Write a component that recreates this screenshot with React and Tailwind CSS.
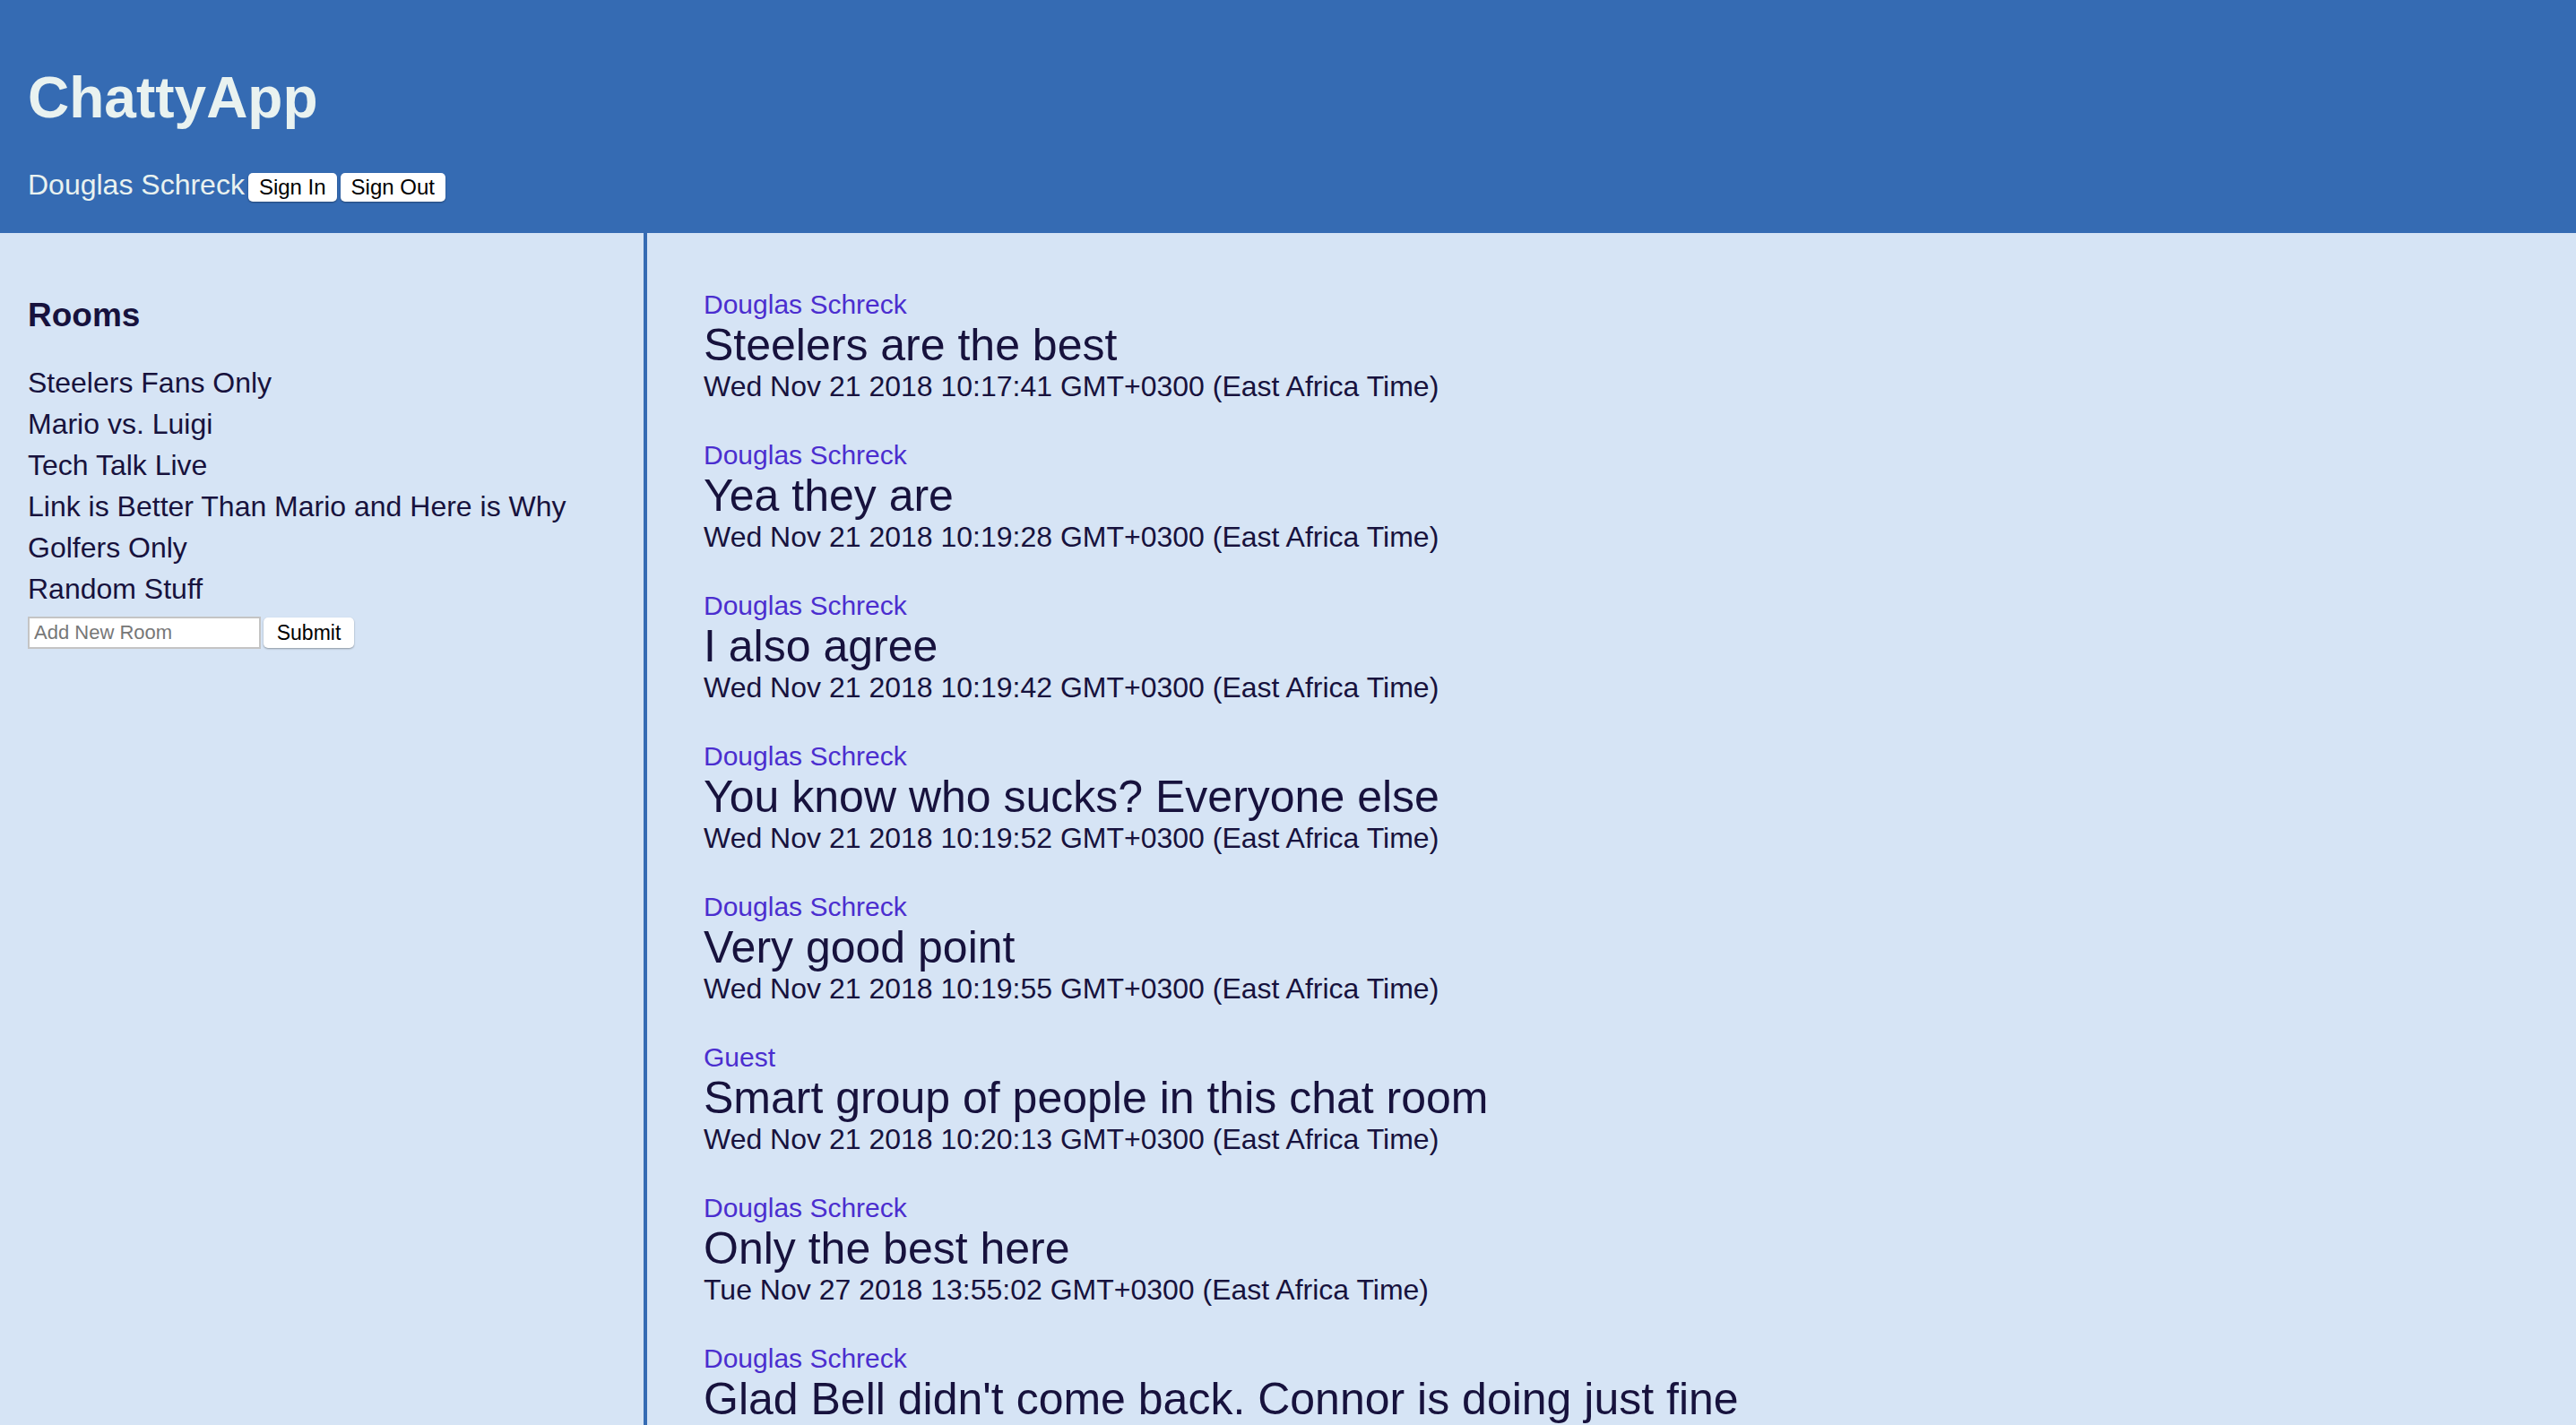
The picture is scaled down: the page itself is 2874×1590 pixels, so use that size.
import React, { useState } from "react";

const rooms = [
  "Steelers Fans Only",
  "Mario vs. Luigi",
  "Tech Talk Live",
  "Link is Better Than Mario and Here is Why",
  "Golfers Only",
  "Random Stuff",
];

const messages = [
  { user: "Douglas Schreck", text: "Steelers are the best", sentAt: "Wed Nov 21 2018 10:17:41 GMT+0300 (East Africa Time)" },
  { user: "Douglas Schreck", text: "Yea they are", sentAt: "Wed Nov 21 2018 10:19:28 GMT+0300 (East Africa Time)" },
  { user: "Douglas Schreck", text: "I also agree", sentAt: "Wed Nov 21 2018 10:19:42 GMT+0300 (East Africa Time)" },
  { user: "Douglas Schreck", text: "You know who sucks? Everyone else", sentAt: "Wed Nov 21 2018 10:19:52 GMT+0300 (East Africa Time)" },
  { user: "Douglas Schreck", text: "Very good point", sentAt: "Wed Nov 21 2018 10:19:55 GMT+0300 (East Africa Time)" },
  { user: "Guest", text: "Smart group of people in this chat room", sentAt: "Wed Nov 21 2018 10:20:13 GMT+0300 (East Africa Time)" },
  { user: "Douglas Schreck", text: "Only the best here", sentAt: "Tue Nov 27 2018 13:55:02 GMT+0300 (East Africa Time)" },
  { user: "Douglas Schreck", text: "Glad Bell didn't come back. Connor is doing just fine" },
];

const btn =
  "bg-white text-black rounded-[5px] px-[12px] h-[32px] text-[24px] leading-[28px] shadow-[0_1px_2px_rgba(0,0,0,0.35)]";

export default function App() {
  const [newRoom, setNewRoom] = useState("");

  return (
    <div className="min-h-screen bg-[#d6e4f5] font-['Liberation_Sans',Arial,sans-serif] text-[#17123d]">
      {/* Header */}
      <header className="h-[260px] bg-[#356bb3] pl-[31px] pt-[72px]">
        <h1 className="text-[64px] leading-[74px] font-bold text-[#e9f2f0]">ChattyApp</h1>
        <div className="mt-[42px] flex items-baseline gap-[4px]">
          <span className="text-[32px] leading-[37px] text-[#e9f2f0]">Douglas Schreck</span>
          <button className={btn}>Sign In</button>
          <button className={btn}>Sign Out</button>
        </div>
      </header>

      <div className="flex min-h-[calc(100vh-260px)]">
        {/* Rooms sidebar */}
        <aside className="w-[722px] shrink-0 border-r-[4px] border-[#356bb3] pl-[31px] pt-[70px]">
          <h3 className="text-[37px] leading-[43px] font-bold">Rooms</h3>
          <ul className="mt-[31px]">
            {rooms.map((room) => (
              <li key={room} className="text-[32px] leading-[46px]">
                {room}
              </li>
            ))}
          </ul>
          <form className="mt-[8px] flex items-center gap-[3px]" onSubmit={(e) => e.preventDefault()}>
            <input
              type="text"
              value={newRoom}
              onChange={(e) => setNewRoom(e.target.value)}
              placeholder="Add New Room"
              className="w-[260px] h-[36px] bg-white border-2 border-[#c4c4c4] px-[5px] text-[22px] text-black placeholder:text-[#777] outline-none"
            />
            <button type="submit" className="bg-white text-black rounded-[5px] w-[101px] h-[34px] text-[23px] shadow-[0_1px_2px_rgba(0,0,0,0.35)]">
              Submit
            </button>
          </form>
        </aside>

        {/* Messages */}
        <main className="flex-1 pl-[63px] pt-[63px]">
          {messages.map((msg, idx) => (
            <div key={idx} className="mb-[41px]">
              <div className="text-[30px] leading-[34px] text-[#4b2ecf]">{msg.user}</div>
              <div className="text-[50px] leading-[56px]">{msg.text}</div>
              {msg.sentAt && <div className="text-[32px] leading-[37px]">{msg.sentAt}</div>}
            </div>
          ))}
        </main>
      </div>
    </div>
  );
}
